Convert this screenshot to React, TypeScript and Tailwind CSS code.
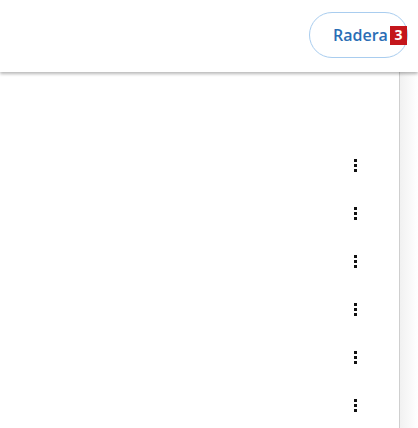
import React from 'react'

// Rader med kebab-meny, 48px höga
const rows = [0, 1, 2, 3, 4, 5]

function Kebab() {
  return (
    <div className="flex flex-col gap-[2px]">
      <span className="block w-[3px] h-[3px] bg-[#111]" />
      <span className="block w-[3px] h-[3px] bg-[#111]" />
      <span className="block w-[3px] h-[3px] bg-[#111]" />
    </div>
  )
}

export default function App() {
  return (
    <div
      className="w-[418px] h-[428px] bg-white overflow-hidden flex flex-col"
      style={{ fontFamily: '"Open Sans", "Liberation Sans", sans-serif' }}
    >
      {/* ── HEADER ─────────────────────────────── */}
      <div className="relative z-10 h-[72px] shrink-0 flex items-center justify-end pr-[10px] bg-white shadow-[0_2px_3px_rgba(0,0,0,0.28)]">
        <button className="w-[99px] h-[46px] mt-[-2px] rounded-full border-[1.5px] border-[#a9cdef] flex items-center pl-[23px] bg-white">
          <span className="text-[16px] font-semibold text-[#2a6db5] leading-none">Radera</span>
          <span className="ml-[2px] w-[18px] h-[19px] bg-[#c4161c] text-white text-[14px] font-bold flex items-center justify-center leading-none">
            3
          </span>
        </button>
      </div>

      {/* ── LISTA ──────────────────────────────── */}
      <div className="flex flex-1">
        <div className="w-[400px] border-r border-[#cfcfcf] pt-[69px]">
          {rows.map((r) => (
            <div key={r} className="h-[48px] flex items-center justify-end pr-[42px]">
              <Kebab />
            </div>
          ))}
        </div>
        <div className="flex-1 bg-gradient-to-r from-[#f1f1f1] to-white" />
      </div>
    </div>
  )
}
